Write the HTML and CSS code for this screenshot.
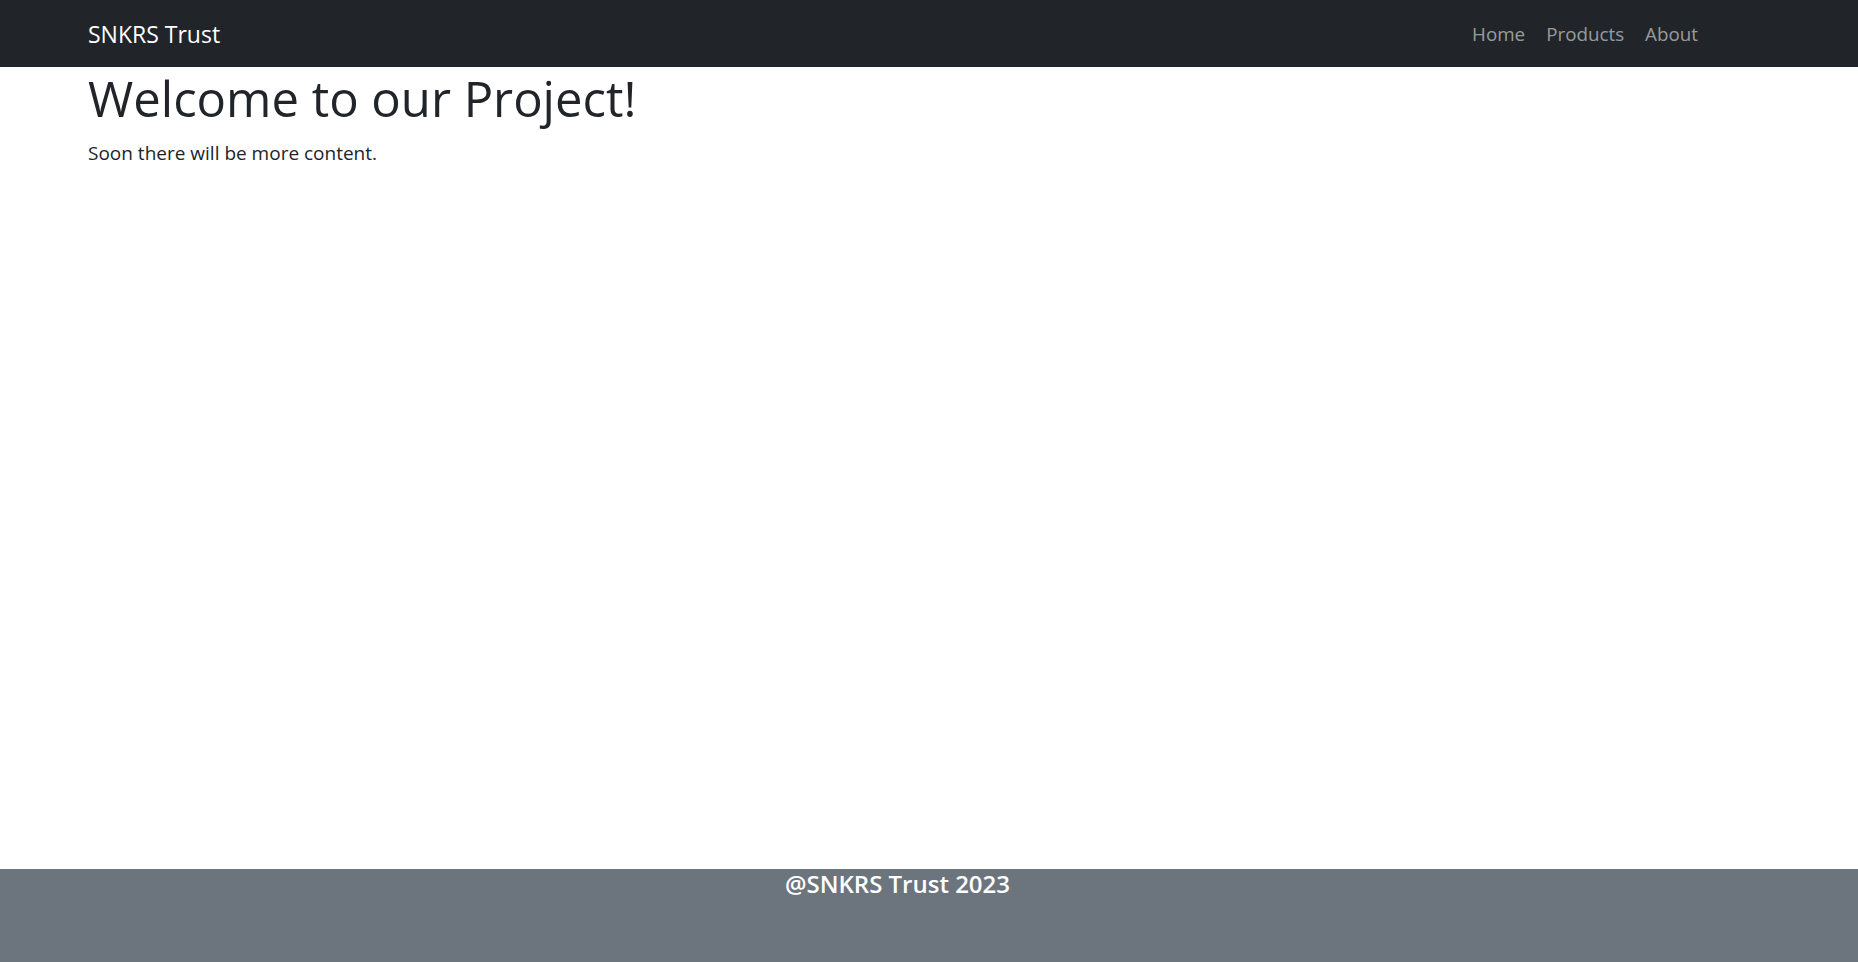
FILE: index.html
```html
<!DOCTYPE html>
<html lang="en">
<head>
<meta charset="utf-8">
<title>SNKRS Trust</title>
<link rel="stylesheet" href="styles.css">
</head>
<body>
<div class="page">
  <nav class="navbar">
    <a class="brand" href="#">SNKRS Trust</a>
    <ul class="nav-links">
      <li><a href="#">Home</a></li>
      <li><a href="#">Products</a></li>
      <li><a href="#">About</a></li>
    </ul>
  </nav>
  <main class="content">
    <h1 class="title">Welcome to our Project!</h1>
    <p class="lead-text">Soon there will be more content.</p>
  </main>
  <footer class="footer">
    <h5 class="footer-text">@SNKRS Trust 2023</h5>
  </footer>
</div>
</body>
</html>
```

FILE: styles.css
```css
* { box-sizing: border-box; }
html, body { margin: 0; padding: 0; }
body {
  font-family: "Open Sans", "Noto Sans", "Liberation Sans", sans-serif;
  color: #212529;
  background: #fff;
}
.page {
  min-height: 962px;
  display: flex;
  flex-direction: column;
}
.navbar {
  height: 67px;
  background: #212529;
  display: flex;
  align-items: center;
  justify-content: space-between;
  padding: 0 160px 0 88px;
}
.brand {
  color: #fff;
  text-decoration: none;
  font-size: 23px;
  line-height: 30px;
}
.nav-links {
  list-style: none;
  margin: 0;
  padding: 0;
  display: flex;
  gap: 21px;
}
.nav-links a {
  color: rgba(255, 255, 255, 0.55);
  text-decoration: none;
  font-size: 18.8px;
  line-height: 28px;
}
.content {
  flex: 1;
  padding: 0 88px;
}
.title {
  margin: 2px 0 11px;
  font-size: 49px;
  font-weight: 500;
  line-height: 1.2;
}
.lead-text {
  margin: 0;
  font-size: 19px;
  line-height: 1.5;
}
.footer {
  height: 93px;
  background: #6c757d;
  padding: 1px 63px 0 0;
}
.footer-text {
  margin: 0;
  color: #fff;
  text-align: center;
  font-size: 24px;
  font-weight: 600;
  line-height: 1.2;
}
```
